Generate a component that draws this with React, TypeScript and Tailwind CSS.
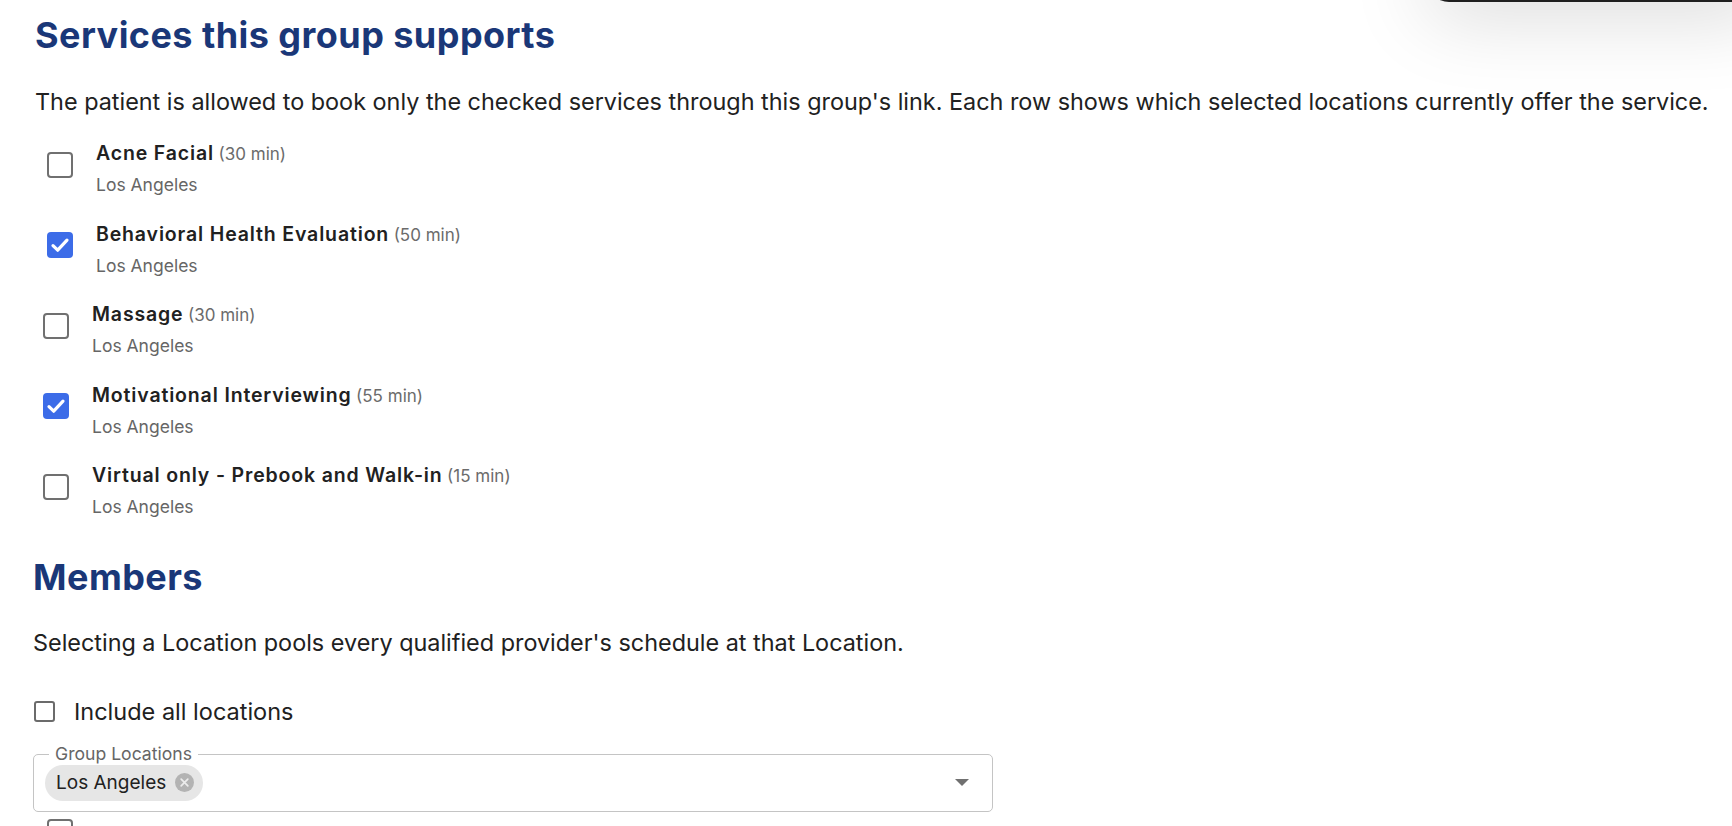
import React from 'react';

type Service = { name: string; minutes: number; checked: boolean; shifted: boolean };

const services: Service[] = [
  { name: 'Acne Facial', minutes: 30, checked: false, shifted: true },
  { name: 'Behavioral Health Evaluation', minutes: 50, checked: true, shifted: true },
  { name: 'Massage', minutes: 30, checked: false, shifted: false },
  { name: 'Motivational Interviewing', minutes: 55, checked: true, shifted: false },
  { name: 'Virtual only - Prebook and Walk-in', minutes: 15, checked: false, shifted: false },
];

const Checkbox = ({ checked, small }: { checked?: boolean; small?: boolean }) => {
  if (checked) {
    return (
      <span className="flex h-[26px] w-[26px] shrink-0 items-center justify-center rounded-[4px] bg-[#3c6ce8]">
        <svg viewBox="0 0 26 26" className="h-[26px] w-[26px]">
          <path d="M6 13.6l4.7 4.6L20 8.2" fill="none" stroke="white" strokeWidth="3.2" strokeLinecap="round" strokeLinejoin="round" />
        </svg>
      </span>
    );
  }
  return (
    <span
      className={
        small
          ? 'block h-[21px] w-[21px] shrink-0 rounded-[3px] border-2 border-[#6b6b6b]'
          : 'block h-[26px] w-[26px] shrink-0 rounded-[4px] border-[2.5px] border-[#707070]'
      }
    />
  );
};

export default function App() {
  return (
    <div className="relative h-[826px] overflow-hidden bg-white font-['Inter',sans-serif] text-[#212121]">
      {/* dark element peeking from above, with its shadow */}
      <div className="absolute right-[-40px] top-[-70px] h-[72px] w-[345px] rounded-[22px] bg-[#1f1f1f] shadow-[0_14px_80px_rgba(0,0,0,0.15)]" />

      {/* Services */}
      <section className="pl-[35px] pt-[13px]">
        <h2 className="text-[36px] font-bold leading-[44px] tracking-[0.45px] text-[#1a3778]">
          Services this group supports
        </h2>
        <p className="mt-[29px] text-[23.4px] leading-[32px]">
          The patient is allowed to book only the checked services through this group's link. Each row shows which
          selected locations currently offer the service.
        </p>

        <div className="mt-[21px] flex flex-col gap-[20.5px]">
          {services.map((s) => (
            <div key={s.name} className={s.shifted ? 'flex items-start gap-[23px] pl-[12px]' : 'flex items-start gap-[23px] pl-[8px]'}>
              <div className="mt-[12.5px]">
                <Checkbox checked={s.checked} />
              </div>
              <div>
                <div className="leading-[28px]">
                  <span className="text-[19.5px] font-semibold tracking-[0.85px]">{s.name}</span>{' '}
                  <span className="text-[17px] text-[#6b6b6b]">({s.minutes} min)</span>
                </div>
                <div className="mt-[3px] text-[17.5px] leading-[28px] text-[#666666]">Los Angeles</div>
              </div>
            </div>
          ))}
        </div>
      </section>

      {/* Members */}
      <section className="pl-[33px]">
        <h2 className="mt-[33.5px] text-[36px] font-bold leading-[44px] tracking-[0.45px] text-[#1a3778]">Members</h2>
        <p className="mt-[28px] text-[23.4px] leading-[32px]">
          Selecting a Location pools every qualified provider's schedule at that Location.
        </p>

        <label className="mt-[37px] flex items-center gap-[19px] pl-[1px]">
          <Checkbox small />
          <span className="text-[23.5px] leading-[32px]">Include all locations</span>
        </label>

        <div className="relative mt-[26px] flex w-[960px] items-center justify-between rounded-[5px] border border-[#c4c4c4] pb-[10px] pl-[11px] pr-[23px] pt-[10px]">
          <span className="absolute left-[15px] top-[-10px] bg-white px-[6px] text-[17.6px] leading-[18px] text-[#666666]">
            Group Locations
          </span>
          <span className="flex h-[36px] items-center gap-[9px] rounded-full bg-[#e6e6e6] pl-[11px] pr-[9px]">
            <span className="text-[19px] leading-none text-[#212121]">Los Angeles</span>
            <svg viewBox="0 0 20 20" className="h-[19px] w-[19px]">
              <circle cx="10" cy="10" r="10" fill="#b3b3b3" />
              <path d="M6.5 6.5l7 7M13.5 6.5l-7 7" stroke="#ececec" strokeWidth="1.8" strokeLinecap="round" />
            </svg>
          </span>
          <svg viewBox="0 0 14 7" className="h-[7px] w-[14px]">
            <path d="M0 0h14L7 7z" fill="#707070" />
          </svg>
        </div>

        <div className="ml-[14px] mt-[7px]">
          <Checkbox />
        </div>
      </section>
    </div>
  );
}
